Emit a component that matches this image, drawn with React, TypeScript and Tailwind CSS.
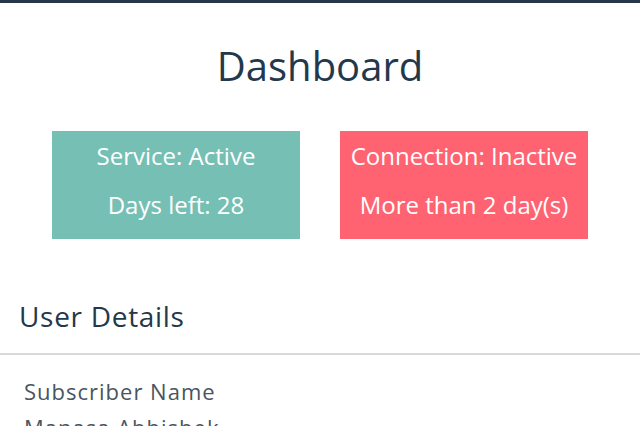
const font = { fontFamily: '"Open Sans", "Noto Sans", sans-serif' };

function StatusCard({ color, lines }: { color: string; lines: string[] }) {
  return (
    <div className={`w-[248px] h-[108px] ${color} flex flex-col items-center pt-[7px] gap-[13px] text-white text-[24px] leading-[36px]`}>
      {lines.map((l) => (
        <p key={l}>{l}</p>
      ))}
    </div>
  );
}

export default function App() {
  return (
    <div className="min-h-screen bg-white overflow-hidden" style={font}>
      <div className="h-[3px] bg-[#263847]" />

      <h1 className="pt-[35px] text-center text-[40px] leading-[56px] text-[#23384b]">Dashboard</h1>

      <div className="mt-[37px] flex justify-center gap-[40px]">
        <StatusCard color="bg-[#76bfb4]" lines={['Service: Active', 'Days left: 28']} />
        <StatusCard color="bg-[#ff6371]" lines={['Connection: Inactive', 'More than 2 day(s)']} />
      </div>

      {/* User details */}
      <h2 className="mt-[57px] px-[19px] text-[28px] leading-[40px] tracking-[0.7px] text-[#23384b]">User Details</h2>
      <div className="mt-[17px] h-[2px] bg-[#d8d8d8]" />
      <div className="mt-[18px] px-[24px] text-[22px] leading-[36px] tracking-[1px] text-[#4a5561]">
        <p>Subscriber Name</p>
        <p>Manasa Abhishek</p>
      </div>
    </div>
  );
}
